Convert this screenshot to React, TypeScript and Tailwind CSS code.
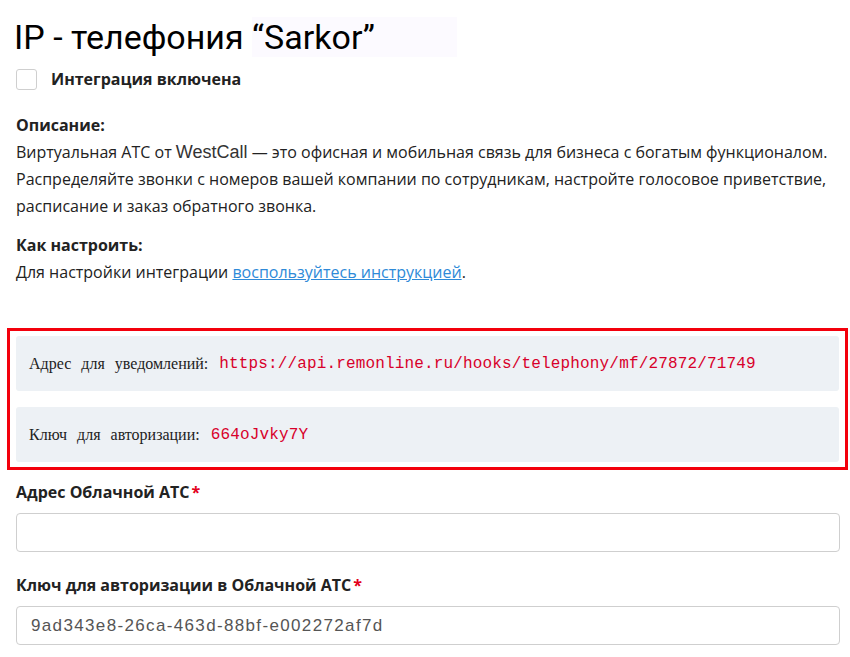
import React from "react";

const sans = "font-['Open_Sans',sans-serif]";

function Field({ label, value }: { label: string; value?: string }) {
  return (
    <div className="flex flex-col">
      <div className={`${sans} text-[16px] font-bold text-[#222] leading-5 mb-[11px]`}>
        {label}
        <span className="text-[#e3001b] ml-[2px]">*</span>
      </div>
      <div className="h-[39px] rounded-[4px] border border-[#cfcfcf] bg-white flex items-center px-[14px] font-['Liberation_Sans',sans-serif] text-[17px] tracking-[1.35px] text-[#555]">
        {value}
      </div>
    </div>
  );
}

function CodeRow({ label, value }: { label: string; value: string }) {
  return (
    <div className="h-[55px] rounded-[3px] bg-[#edf1f5] flex items-center px-[13px]">
      <span className="font-['Liberation_Serif',serif] text-[16px] text-[#222] [word-spacing:6px]">{label}</span>
      <span className="font-['Liberation_Mono',monospace] text-[16px] tracking-[0.15px] text-[#d8002a] ml-[11px]">{value}</span>
    </div>
  );
}

export default function App() {
  return (
    <div className="w-[850px] h-[657px] bg-white overflow-hidden flex flex-col pl-[16px] pr-[10px]">
      <h1 className="font-['Roboto',sans-serif] text-[34px] text-black leading-[40px] mt-[17px] -ml-[2px] flex">
        <span>IP - телефония&nbsp;</span>
        <span className="bg-[#fcfaff] pr-[82px]">“Sarkor”</span>
      </h1>

      <label className="flex items-center mt-[10px]">
        <span className="w-[21px] h-[21px] rounded-[3px] border border-[#cfcfcf] bg-white" />
        <span className={`${sans} text-[16px] font-bold text-[#222] ml-[14px]`}>Интеграция включена</span>
      </label>

      <div className={`${sans} text-[16px] text-[#222] leading-[27px] mt-[21px] w-[826px]`}>
        <div className="font-bold">Описание:</div>
        <p>
          Виртуальная АТС от{" "}
          <span className="font-['Liberation_Sans',sans-serif] text-[18px] leading-[20px] text-[#333]">WestCall</span> — это
          офисная и мобильная связь для бизнеса с богатым функционалом. Распределяйте звонки с номеров вашей
          компании по сотрудникам, настройте голосовое приветствие, расписание и заказ обратного звонка.
        </p>
        <div className="font-bold mt-[12px]">Как настроить:</div>
        <p>
          Для настройки интеграции{" "}
          <a href="#" className="text-[#2e8ad8] underline">
            воспользуйтесь инструкцией
          </a>
          .
        </p>
      </div>

      <div className="mt-[42px] -ml-[9px] mr-[-8px] border-[3px] border-[#f3000c] px-[6px] py-[5px] flex flex-col gap-[16px]">
        <CodeRow label="Адрес для уведомлений:" value="https://api.remonline.ru/hooks/telephony/mf/27872/71749" />
        <CodeRow label="Ключ для авторизации:" value="664oJvky7Y" />
      </div>

      <div className="flex flex-col gap-[23px] mt-[12px] w-[824px]">
        <Field label="Адрес Облачной АТС" />
        <Field label="Ключ для авторизации в Облачной АТС" value="9ad343e8-26ca-463d-88bf-e002272af7d" />
      </div>
    </div>
  );
}
